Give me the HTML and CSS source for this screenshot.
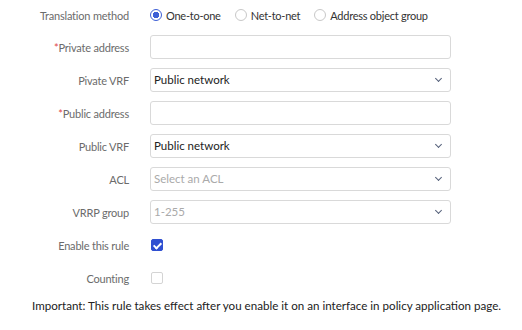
FILE: index.html
```html
<!DOCTYPE html>
<html lang="en">
<head>
    <meta charset="UTF-8">
    <title>NAT rule</title>
    <link rel="stylesheet" href="styles.css">
</head>
<body>
    <form class="form">
        <div class="row row-first">
            <label class="label">Translation method</label>
            <div class="control radios">
                <span class="radio checked"><i></i>One-to-one</span>
                <span class="radio"><i></i>Net-to-net</span>
                <span class="radio"><i></i>Address object group</span>
            </div>
        </div>
        <div class="row">
            <label class="label"><span class="req">*</span>Private address</label>
            <div class="control"><div class="input"></div></div>
        </div>
        <div class="row">
            <label class="label">Pivate VRF</label>
            <div class="control"><div class="input select">Public network<span class="arrow"></span></div></div>
        </div>
        <div class="row">
            <label class="label"><span class="req">*</span>Public address</label>
            <div class="control"><div class="input"></div></div>
        </div>
        <div class="row">
            <label class="label">Public VRF</label>
            <div class="control"><div class="input select">Public network<span class="arrow"></span></div></div>
        </div>
        <div class="row">
            <label class="label">ACL</label>
            <div class="control"><div class="input select placeholder">Select an ACL<span class="arrow"></span></div></div>
        </div>
        <div class="row">
            <label class="label">VRRP group</label>
            <div class="control"><div class="input select placeholder">1-255<span class="arrow"></span></div></div>
        </div>
        <div class="row">
            <label class="label">Enable this rule</label>
            <div class="control"><span class="checkbox checked"></span></div>
        </div>
        <div class="row">
            <label class="label">Counting</label>
            <div class="control"><span class="checkbox"></span></div>
        </div>
    </form>
    <p class="note">Important: This rule takes effect after you enable it on an interface in policy application page.</p>
</body>
</html>
```

FILE: styles.css
```css
* {
    margin: 0;
    padding: 0;
    box-sizing: border-box;
}
body {
    background: #fff;
    font-family: Lato, "Liberation Sans", sans-serif;
    font-size: 12px;
    color: #333;
}
.form {
    padding-top: 3px;
}
.row {
    display: grid;
    grid-template-columns: 129px 301px;
    column-gap: 21px;
    align-items: center;
    height: 24px;
    margin-bottom: 9px;
}
.row-first {
    margin-bottom: 8px;
}
.label {
    text-align: right;
    color: #6b6b6b;
    font-size: 11px;
    letter-spacing: -0.2px;
    white-space: nowrap;
}
.req {
    color: #e0474a;
}
.control {
    display: flex;
    align-items: center;
}
.radios {
    gap: 14px;
}
.radio {
    display: flex;
    align-items: center;
    gap: 4px;
    color: #333;
    font-size: 11px;
    letter-spacing: -0.25px;
    white-space: nowrap;
}
.radio i {
    width: 12px;
    height: 12px;
    border: 1px solid #c8c8c8;
    border-radius: 50%;
    background: #fff;
}
.radio.checked i {
    border-color: #3d5fd6;
    background: radial-gradient(circle, #3d5fd6 0 3px, #fff 3.5px);
}
.input {
    position: relative;
    width: 100%;
    height: 24px;
    border: 1px solid #d9d9d9;
    border-radius: 3px;
    background: #fff;
    padding: 0 3px;
    font-size: 11.5px;
    line-height: 22px;
    color: #222;
}
.placeholder {
    color: #aaa;
}
.arrow {
    position: absolute;
    right: 9px;
    top: 7px;
    width: 5px;
    height: 5px;
    border-right: 1px solid #55607a;
    border-bottom: 1px solid #55607a;
    transform: rotate(45deg);
}
.checkbox {
    width: 12px;
    height: 12px;
    margin-left: 1px;
    border: 1px solid #d4d4d4;
    border-radius: 2px;
    background: #fff;
    position: relative;
}
.checkbox.checked {
    background: #2f4fd1;
    border-color: #2f4fd1;
}
.checkbox.checked::after {
    content: "";
    position: absolute;
    left: 3px;
    top: 1px;
    width: 3px;
    height: 6px;
    border-right: 2px solid #fff;
    border-bottom: 2px solid #fff;
    transform: rotate(45deg);
}
.note {
    margin: 6px 0 0 32px;
    color: #222;
    font-size: 11.6px;
    white-space: nowrap;
}
```
